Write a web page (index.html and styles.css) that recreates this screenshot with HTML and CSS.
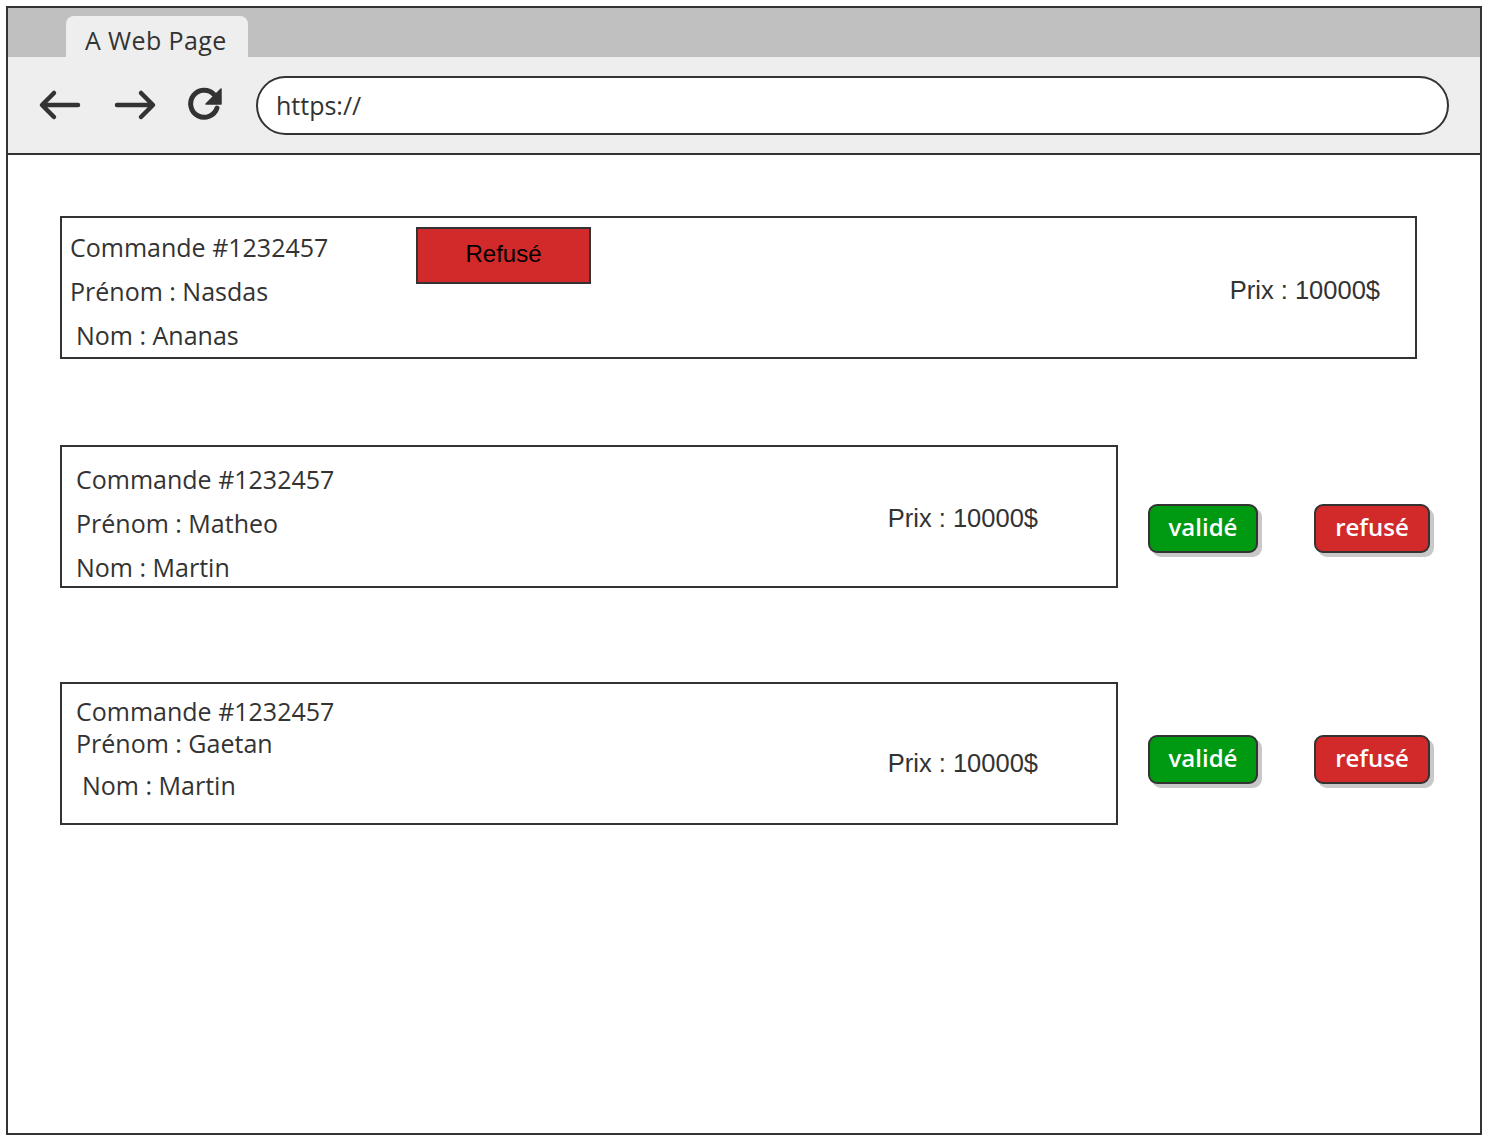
FILE: index.html
```html
<!DOCTYPE html>
<html lang="fr">
<head>
<meta charset="utf-8">
<title>A Web Page</title>
<link rel="stylesheet" href="styles.css">
</head>
<body>
<div class="window">
  <div class="tabbar">
    <div class="tab">A Web Page</div>
  </div>
  <div class="toolbar">
    <svg class="icon back" width="44" height="32" viewBox="0 0 44 32"><path d="M40 16H5M16 4L4 16L16 28" fill="none" stroke="#333" stroke-width="4.5" stroke-linecap="round" stroke-linejoin="round"/></svg>
    <svg class="icon fwd" width="44" height="32" viewBox="0 0 44 32"><path d="M4 16H39M28 4L40 16L28 28" fill="none" stroke="#333" stroke-width="4.5" stroke-linecap="round" stroke-linejoin="round"/></svg>
    <svg class="icon reload" width="40" height="40" viewBox="0 0 40 40"><path d="M29 10.5A13.5 13.5 0 1 0 32 24" fill="none" stroke="#333" stroke-width="5" stroke-linecap="round"/><path d="M36 5V20H21Z" fill="#333" stroke="#333" stroke-width="1.5" stroke-linejoin="round"/></svg>
    <div class="url">https://</div>
  </div>
  <div class="content">
    <div class="card card-wide">
      <div class="info info-1">
        <div class="line">Commande #1232457</div>
        <div class="line">Prénom : Nasdas</div>
        <div class="line indent">Nom : Ananas</div>
      </div>
      <div class="status">Refusé</div>
      <div class="price price-1">Prix : 10000$</div>
    </div>

    <div class="row row-2">
      <div class="card card-narrow">
        <div class="info info-2">
          <div class="line">Commande #1232457</div>
          <div class="line">Prénom : Matheo</div>
          <div class="line">Nom : Martin</div>
        </div>
        <div class="price price-2">Prix : 10000$</div>
      </div>
      <div class="actions">
        <div class="btn btn-ok">validé</div>
        <div class="btn btn-no">refusé</div>
      </div>
    </div>

    <div class="row row-3">
      <div class="card card-narrow">
        <div class="info info-3">
          <div class="line l1">Commande #1232457</div>
          <div class="line l2">Prénom : Gaetan</div>
          <div class="line l3 indent">Nom : Martin</div>
        </div>
        <div class="price price-3">Prix : 10000$</div>
      </div>
      <div class="actions">
        <div class="btn btn-ok">validé</div>
        <div class="btn btn-no">refusé</div>
      </div>
    </div>
  </div>
</div>
</body>
</html>
```

FILE: styles.css
```css
* { box-sizing: border-box; }
html, body { margin: 0; padding: 0; background: #fff; }
body {
  font-family: "Open Sans", "Noto Sans", sans-serif;
  color: #333;
}
.window {
  margin: 6px 0 0 6px;
  width: 1476px;
  height: 1129px;
  border: 2px solid #333;
  display: flex;
  flex-direction: column;
  overflow: hidden;
}
.tabbar {
  height: 49px;
  background: #c0c0c0;
  padding: 8px 0 0 58px;
  display: flex;
  align-items: flex-end;
  flex-shrink: 0;
}
.tab {
  width: 182px;
  height: 41px;
  background: #eeeeee;
  border-radius: 8px 8px 0 0;
  padding-left: 19px;
  font-size: 25px;
  letter-spacing: 0.4px;
  overflow: hidden;
  line-height: 48px;
  color: #333;
}
.toolbar {
  height: 98px;
  background: #eeeeee;
  border-bottom: 2px solid #333;
  display: flex;
  align-items: center;
  padding: 0 0 0 30px;
  flex-shrink: 0;
}
.icon { display: block; flex-shrink: 0; }
.back { margin-left: 0; }
.fwd { margin-left: 31px; }
.reload { margin-left: 28px; margin-top: -2px; }
.url {
  margin-left: 31px;
  width: 1193px;
  height: 59px;
  background: #fff;
  border: 2.5px solid #333;
  border-radius: 30px;
  font-size: 25px;
  line-height: 54px;
  padding-left: 18px;
  color: #333;
}
.content {
  padding: 61px 0 0 52px;
  display: flex;
  flex-direction: column;
}
.card {
  border: 2.5px solid #333;
  background: #fff;
  display: flex;
  height: 143px;
}
.card-wide { width: 1357px; }
.card-narrow { width: 1058px; }
.line {
  font-size: 25px;
  line-height: 44px;
  white-space: nowrap;
}
.indent { padding-left: 6px; }
.info-1 { width: 354px; padding: 7px 0 0 8px; flex-shrink: 0; }
.status {
  margin-top: 9px;
  width: 175px;
  height: 57px;
  background: #d22a2a;
  border: 2.5px solid #333;
  color: #000;
  font-family: "Liberation Sans", Arial, sans-serif;
  font-size: 24px;
  text-align: center;
  line-height: 50px;
  flex-shrink: 0;
}
.price {
  font-family: "Liberation Sans", Arial, sans-serif;
  font-size: 25.5px;
  color: #333;
  white-space: nowrap;
  margin-left: auto;
}
.price-1 { align-self: center; margin-top: 5px; margin-right: 35px; }
.row { display: flex; align-items: flex-start; }
.row-2 { margin-top: 86px; }
.row-3 { margin-top: 94px; }
.info-2 { padding: 10px 0 0 14px; }
.price-2 { align-self: center; margin-top: 4px; margin-right: 78px; }
.info-3 { padding: 5px 0 0 14px; }
.info-3 .l1 { line-height: 44px; }
.info-3 .l2 { line-height: 20px; }
.info-3 .l3 { line-height: 64px; }
.price-3 { align-self: center; margin-top: 20px; margin-right: 78px; }
.actions {
  display: flex;
  gap: 56px;
  margin-left: 30px;
}
.row-2 .actions { margin-top: 59px; }
.row-3 .actions { margin-top: 53px; }
.btn {
  height: 49px;
  border: 2.5px solid #333;
  border-radius: 9px;
  box-shadow: 4px 4px 0 #c8c8c8;
  color: #fff;
  font-size: 24px;
  font-weight: 600;
  text-align: center;
  line-height: 42px;
}
.btn-ok { width: 110px; background: #009a12; }
.btn-no { width: 116px; background: #d22a2a; }
```
